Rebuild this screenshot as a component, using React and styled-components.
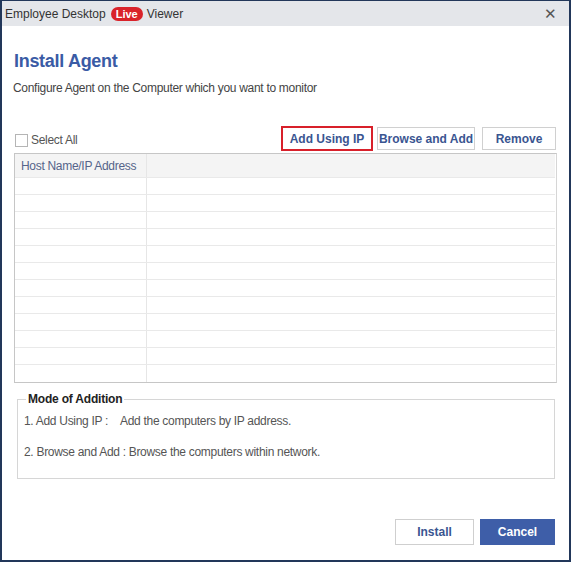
import React from "react";
import styled, { createGlobalStyle } from "styled-components";

const GlobalStyle = createGlobalStyle`
  html, body {
    margin: 0;
    padding: 0;
    background: #ffffff;
  }
  body {
    font-family: "Liberation Sans", Arial, sans-serif;
    font-size: 12px;
    color: #444;
  }
`;

const Window = styled.div`
  width: 571px;
  height: 562px;
  box-sizing: border-box;
  border: 2px solid #22375a;
  border-top-width: 1px;
  display: flex;
  flex-direction: column;
  background: #fff;
`;

const TitleBar = styled.div`
  height: 25px;
  flex: none;
  background: #e4e6ea;
  display: flex;
  align-items: center;
  padding: 0 12px 0 3px;
  font-size: 12px;
  color: #333;
`;

const LiveBadge = styled.span`
  background: #d9232a;
  color: #fff;
  font-weight: bold;
  font-size: 11px;
  border-radius: 7px;
  padding: 1px 5px;
  margin: 0 4px 0 5px;
  line-height: 12px;
`;

const CloseBtn = styled.span`
  margin-left: auto;
  font-size: 15px;
  color: #555;
  line-height: 1;
`;

const Body = styled.div`
  flex: 1;
  display: flex;
  flex-direction: column;
  padding: 0 12px 0 12px;
`;

const Heading = styled.h1`
  margin: 23px 0 0;
  font-size: 18px;
  line-height: 24px;
  font-weight: bold;
  color: #3a5ba5;
  letter-spacing: -0.3px;
`;

const Subtitle = styled.p`
  margin: 7px 0 0 -1px;
  font-size: 12px;
  line-height: 16px;
  letter-spacing: -0.3px;
  color: #444;
`;

const Toolbar = styled.div`
  margin-top: 30px;
  height: 25px;
  display: flex;
  align-items: center;
`;

const SelectAll = styled.label`
  display: flex;
  align-items: center;
  gap: 3px;
  margin: 3px 0 0 1px;
  color: #555;
  letter-spacing: -0.3px;
`;

const CheckBox = styled.span`
  width: 11px;
  height: 11px;
  border: 1px solid #b5b5b5;
  background: #fff;
`;

const Button = styled.button`
  height: ${(p) => (p.$active ? "25px" : "23px")};
  width: ${(p) => p.$w}px;
  margin-left: ${(p) => p.$ml || 0}px;
  box-sizing: border-box;
  border: ${(p) => (p.$active ? "2px solid #d8202a" : "1px solid #d0d0d0")};
  background: #fff;
  color: #3a5591;
  font-family: "Liberation Sans", Arial, sans-serif;
  font-weight: bold;
  font-size: 12px;
  padding: 0;
  cursor: pointer;
`;

const Spacer = styled.div`
  flex: 1;
`;

const Table = styled.div`
  margin-top: 2px;
  width: 543px;
  box-sizing: border-box;
  border: 1px solid #c6c6c6;
  border-right-color: #d6d6d6;
`;

const Row = styled.div`
  display: flex;
  height: ${(p) => (p.$header ? "24px" : "17px")};
  box-sizing: border-box;
  background: ${(p) => (p.$header ? "#f4f4f4" : "#fff")};
  border-bottom: ${(p) => (p.$last ? "none" : "1px solid #e9e9e9")};
  margin-right: 1px;
`;

const Cell = styled.div`
  box-sizing: border-box;
  width: ${(p) => (p.$first ? "132px" : "auto")};
  flex: ${(p) => (p.$first ? "none" : "1")};
  border-right: ${(p) => (p.$first ? "1px solid #e6e6e6" : "none")};
  display: flex;
  align-items: center;
  padding-left: 6px;
  color: #55648a;
  letter-spacing: -0.3px;
`;

const Group = styled.fieldset`
  margin: 9px 2px 0 3px;
  padding: 0 0 0 6px;
  height: 87px;
  box-sizing: border-box;
  border: 1px solid #d6d6d6;
`;

const Legend = styled.legend`
  font-weight: bold;
  color: #222;
  font-size: 12px;
  padding: 0 2px;
  margin-left: 2px;
  letter-spacing: -0.2px;
`;

const ModeLine = styled.div`
  display: flex;
  margin-top: ${(p) => p.$mt}px;
  color: #555;
  letter-spacing: -0.3px;
  line-height: 14px;
`;

const ModeKey = styled.span`
  width: ${(p) => (p.$w ? `${p.$w}px` : "auto")};
  padding-right: ${(p) => (p.$w ? 0 : 3)}px;
`;

const Footer = styled.div`
  margin-top: auto;
  margin-bottom: 15px;
  display: flex;
  justify-content: flex-end;
  gap: 6px;
  padding-right: 2px;
`;

const FooterButton = styled.button`
  width: ${(p) => p.$w}px;
  height: 26px;
  box-sizing: border-box;
  border: 1px solid ${(p) => (p.$primary ? "#3e5ea8" : "#cfcfcf")};
  background: ${(p) => (p.$primary ? "#3e5ea8" : "#fff")};
  color: ${(p) => (p.$primary ? "#fff" : "#3a5591")};
  font-family: "Liberation Sans", Arial, sans-serif;
  font-weight: bold;
  font-size: 12px;
  padding: 0;
`;

const rows = Array.from({ length: 12 });

export default function App() {
  return (
    <>
      <GlobalStyle />
      <Window>
        <TitleBar>
          Employee Desktop
          <LiveBadge>Live</LiveBadge>
          Viewer
          <CloseBtn>✕</CloseBtn>
        </TitleBar>
        <Body>
          <Heading>Install Agent</Heading>
          <Subtitle>Configure Agent on the Computer which you want to monitor</Subtitle>
          <Toolbar>
            <SelectAll>
              <CheckBox />
              Select All
            </SelectAll>
            <Spacer />
            <Button $active $w={92}>Add Using IP</Button>
            <Button $w={98} $ml={4}>Browse and Add</Button>
            <Button $w={74} $ml={7}>Remove</Button>
            <div style={{ width: 1 }} />
          </Toolbar>
          <Table>
            <Row $header>
              <Cell $first>Host Name/IP Address</Cell>
              <Cell />
            </Row>
            {rows.map((_, i) => (
              <Row key={i} $last={i === rows.length - 1}>
                <Cell $first />
                <Cell />
              </Row>
            ))}
          </Table>
          <Group>
            <Legend>Mode of Addition</Legend>
            <ModeLine $mt={8}>
              <ModeKey $w={96}>1. Add Using IP :</ModeKey>
              <span>Add the computers by IP address.</span>
            </ModeLine>
            <ModeLine $mt={17}>
              <ModeKey>2. Browse and Add :</ModeKey>
              <span>Browse the computers within network.</span>
            </ModeLine>
          </Group>
          <Footer>
            <FooterButton $w={79}>Install</FooterButton>
            <FooterButton $primary $w={75}>Cancel</FooterButton>
          </Footer>
        </Body>
      </Window>
    </>
  );
}
